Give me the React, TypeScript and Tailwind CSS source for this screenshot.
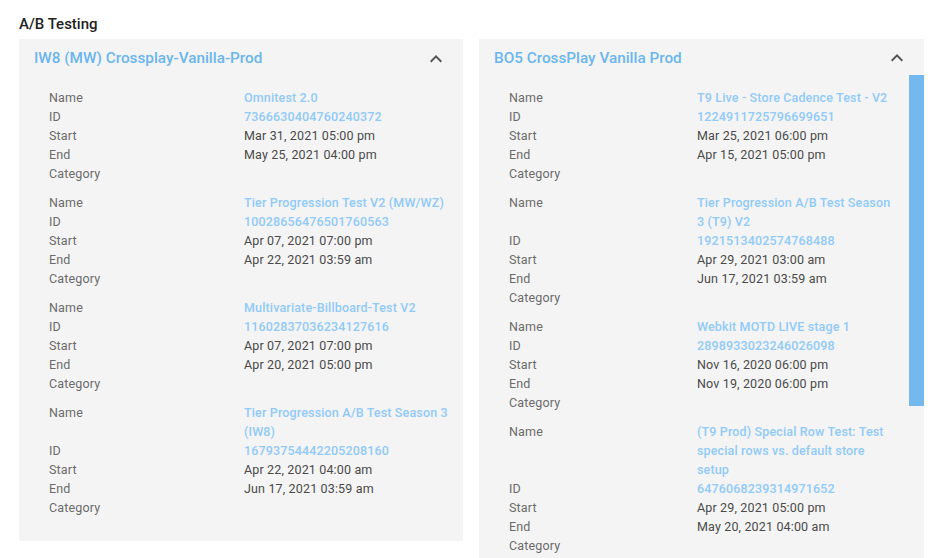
import React from "react";

type Row = { name: string[]; id: string; start: string; end: string };

const left: Row[] = [
  { name: ["Omnitest 2.0"], id: "7366630404760240372", start: "Mar 31, 2021 05:00 pm", end: "May 25, 2021 04:00 pm" },
  { name: ["Tier Progression Test V2 (MW/WZ)"], id: "10028656476501760563", start: "Apr 07, 2021 07:00 pm", end: "Apr 22, 2021 03:59 am" },
  { name: ["Multivariate-Billboard-Test V2"], id: "11602837036234127616", start: "Apr 07, 2021 07:00 pm", end: "Apr 20, 2021 05:00 pm" },
  { name: ["Tier Progression A/B Test Season 3", "(IW8)"], id: "16793754442205208160", start: "Apr 22, 2021 04:00 am", end: "Jun 17, 2021 03:59 am" },
];

const right: Row[] = [
  { name: ["T9 Live - Store Cadence Test - V2"], id: "1224911725796699651", start: "Mar 25, 2021 06:00 pm", end: "Apr 15, 2021 05:00 pm" },
  { name: ["Tier Progression A/B Test Season", "3 (T9) V2"], id: "1921513402574768488", start: "Apr 29, 2021 03:00 am", end: "Jun 17, 2021 03:59 am" },
  { name: ["Webkit MOTD LIVE stage 1"], id: "2898933023246026098", start: "Nov 16, 2020 06:00 pm", end: "Nov 19, 2020 06:00 pm" },
  { name: ["(T9 Prod) Special Row Test: Test", "special rows vs. default store", "setup"], id: "6476068239314971652", start: "Apr 29, 2021 05:00 pm", end: "May 20, 2021 04:00 am" },
];

const Chevron = () => (
  <svg width="24" height="24" viewBox="0 0 24 24" fill="#555">
    <path d="M12 8l-6 6 1.41 1.41L12 10.83l4.59 4.58L18 14z" />
  </svg>
);

function Group({ r, labelW }: { r: Row; labelW: string }) {
  const Label = ({ t }: { t: string }) => <div className={`${labelW} shrink-0 text-[#6b6b6b]`}>{t}</div>;
  return (
    <div className="flex flex-col text-[12.5px] leading-[19px] tracking-[0.15px]">
      <div className="flex">
        <Label t="Name" />
        <div className="flex flex-col font-medium text-[#90caf9]">
          {r.name.map((n, i) => (
            <div key={i}>{n}</div>
          ))}
        </div>
      </div>
      <div className="flex">
        <Label t="ID" />
        <div className="font-medium text-[#90caf9]">{r.id}</div>
      </div>
      <div className="flex">
        <Label t="Start" />
        <div className="text-[#4a4a4a]">{r.start}</div>
      </div>
      <div className="flex">
        <Label t="End" />
        <div className="text-[#4a4a4a]">{r.end}</div>
      </div>
      <div className="flex">
        <Label t="Category" />
        <div />
      </div>
    </div>
  );
}

export default function App() {
  return (
    <div className="w-[943px] h-[558px] overflow-hidden bg-white" style={{ fontFamily: "Roboto, 'Liberation Sans', sans-serif" }}>
      <div className="pl-[19px] pt-[14px] text-[15px] leading-[20px] font-medium text-[#222]">A/B Testing</div>
      <div className="flex items-start gap-[16px] pl-[19px] pt-[5px]">
        <div className="w-[444px] bg-[#f4f4f4]">
          <div className="flex items-center justify-between h-[37px] pl-[15px] pr-[15px] pt-[2px]">
            <div className="text-[15.3px] font-medium text-[#6ab6ee]">IW8 (MW) Crossplay-Vanilla-Prod</div>
            <Chevron />
          </div>
          <div className="flex flex-col gap-[10px] pl-[30px] pt-[12px] pb-[24px]">
            {left.map((r, i) => (
              <Group key={i} r={r} labelW="w-[195px]" />
            ))}
          </div>
        </div>
        <div className="w-[445px] bg-[#f4f4f4]">
          <div className="flex items-center justify-between h-[36px] pl-[15px] pr-[15px] pt-[2px]">
            <div className="text-[15.3px] font-medium text-[#6ab6ee]">BO5 CrossPlay Vanilla Prod</div>
            <Chevron />
          </div>
          <div className="flex">
            <div className="flex-1 flex flex-col gap-[10px] pl-[30px] pt-[13px] pb-[24px]">
              {right.map((r, i) => (
                <Group key={i} r={r} labelW="w-[188px]" />
              ))}
            </div>
            <div className="w-[15px] shrink-0">
              <div className="h-[331px] bg-[#74b9ed]" />
            </div>
          </div>
        </div>
      </div>
    </div>
  );
}
